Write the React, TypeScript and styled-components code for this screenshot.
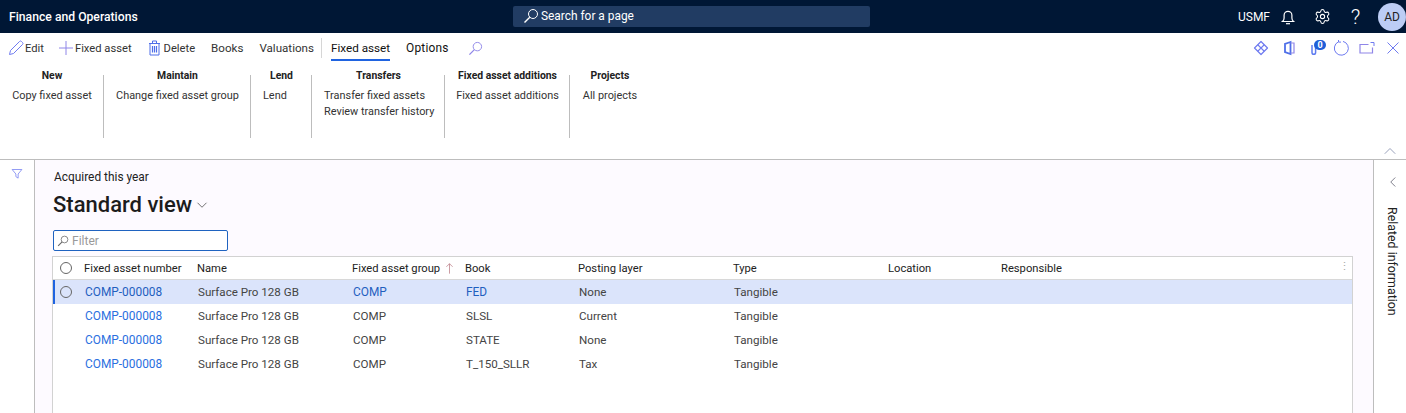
import React, { FC } from "react";
import styled, { createGlobalStyle } from "styled-components";
import { Settings } from "lucide-react";

const rows = [
  { book: "FED", layer: "None", selected: true },
  { book: "SLSL", layer: "Current", selected: false },
  { book: "STATE", layer: "None", selected: false },
  { book: "T_150_SLLR", layer: "Tax", selected: false },
];

const ribbon = [
  { title: "New", width: 104, items: ["Copy fixed asset"] },
  { title: "Maintain", width: 147, items: ["Change fixed asset group"] },
  { title: "Lend", width: 61, items: ["Lend"], left: true },
  { title: "Transfers", width: 133, items: ["Transfer fixed assets", "Review transfer history"], left: true },
  { title: "Fixed asset additions", width: 125, items: ["Fixed asset additions"] },
  { title: "Projects", width: 80, items: ["All projects"], last: true },
];

const Stroke: FC<{ size?: number; color?: string; children: React.ReactNode }> = ({
  size = 16,
  color = "#6f7bf0",
  children,
}) => (
  <svg width={size} height={size} viewBox="0 0 16 16" fill="none" stroke={color} strokeWidth="1">
    {children}
  </svg>
);

const SearchGlyph: FC<{ size?: number; color?: string }> = ({ size, color }) => (
  <Stroke size={size} color={color}>
    <circle cx="10" cy="6" r="4.5" />
    <path d="M6.8 9.2 1.5 14.5" strokeWidth="1.4" />
  </Stroke>
);

const App: FC = () => (
  <>
    <Global />
    <S.Page>
      <S.Nav>
        <S.Brand>Finance and Operations</S.Brand>
        <S.Search>
          <SearchGlyph size={16} color="#ffffff" />
          Search for a page
        </S.Search>
        <S.NavRight>
          <S.Company>USMF</S.Company>
          <S.NavIcon>
            <Stroke color="#fff">
              <path d="M2.5 12.5h11c-1-.8-1.6-1.6-1.6-3.5V6.3a3.9 3.9 0 0 0-7.8 0V9c0 1.9-.6 2.7-1.6 3.5Z" strokeWidth="1.2" />
              <path d="M6 14.7h4" strokeWidth="1.2" />
            </Stroke>
          </S.NavIcon>
          <S.NavIcon>
            <Settings size={17} color="#fff" strokeWidth={1.5} />
          </S.NavIcon>
          <S.Help>?</S.Help>
          <S.Avatar>AD</S.Avatar>
        </S.NavRight>
      </S.Nav>

      <S.ActionBar>
        <S.Action $gap={14}>
          <Stroke>
            <path d="M1.5 14.5l1-4L11.5 1.500a1.4 1.4 0 0 1 2 0l1 1a1.4 1.4 0 0 1 0 2L5.5 13.500Z" />
          </Stroke>
          Edit
        </S.Action>
        <S.Action $gap={15}>
          <Stroke color="#8f86e8">
            <path d="M8 1v14M1 8h14" />
          </Stroke>
          Fixed asset
        </S.Action>
        <S.Action $gap={16}>
          <Stroke color="#4f6fe8">
            <path d="M2 3.5h11M5.500 3.5V1h4v2.5M3 3.5V15h9V3.500" />
            <path d="M5.500 6v6.500M7.500 6v6.500M9.500 6v6.500" strokeWidth="1.2" />
          </Stroke>
          Delete
        </S.Action>
        <S.Tab>Books</S.Tab>
        <S.Tab>Valuations</S.Tab>
        <S.Divider />
        <S.Tab $active>Fixed asset</S.Tab>
        <S.Tab $dark>Options</S.Tab>
        <S.ToolSearch>
          <SearchGlyph size={15} color="#8f86e8" />
        </S.ToolSearch>
        <S.ActionIcons>
          <S.DiamondSlot>
            <Stroke>
              <path d="M8 1.5 14.500 8 8 14.500 1.500 8Z" strokeWidth="1.2" strokeLinejoin="round" />
              <path d="m4.750 4.750 6.500 6.500M11.250 4.750l-6.500 6.500" strokeWidth="1.1" />
            </Stroke>
          </S.DiamondSlot>
          <Stroke color="#4f6fe8">
            <path d="M9.5 2 4 4v8l5.500 2Z" strokeWidth="1.8" />
            <path d="M9.5 3H13v10H9.500" strokeWidth="1.2" stroke="#8f86e8" />
          </Stroke>
          <S.Badged>
            <Stroke color="#5f7cf0">
              <path d="M5 5v7.500a1.800 1.800 0 0 0 3.600 0V5" strokeWidth="1.5" />
            </Stroke>
            <S.Badge>0</S.Badge>
          </S.Badged>
          <Stroke>
            <path d="M5.300 1.900a7 7 0 1 0 4.700-.5" />
            <path d="M5.500 -.5v2.600h2.500" />
          </Stroke>
          <Stroke color="#8f86e8">
            <path d="M13.500 7.500v5.500H1V4.500h8.500" strokeWidth="1.2" />
            <path d="M11.500 2.500h3.500v3.500" stroke="#6f7bf0" />
          </Stroke>
          <Stroke>
            <path d="m2.500 2.500 11 11M13.500 2.500l-11 11" />
          </Stroke>
        </S.ActionIcons>
      </S.ActionBar>

      <S.Ribbon>
        {ribbon.map((group) => (
          <S.Group key={group.title} $width={group.width} $last={group.last}>
            <S.GroupTitle>{group.title}</S.GroupTitle>
            <S.GroupItems $left={group.left}>
              {group.items.map((item) => (
                <S.GroupItem key={item}>{item}</S.GroupItem>
              ))}
            </S.GroupItems>
          </S.Group>
        ))}
        <S.Collapse>
          <Stroke color="#8a94b0" size={14}>
            <path d="m2 10 6-6 6 6" />
          </Stroke>
        </S.Collapse>
      </S.Ribbon>

      <S.Body>
        <S.FilterRail>
          <Stroke size={12}>
            <path d="M1.500 2h13L9.500 8v5.500l-3-2V8Z" />
          </Stroke>
        </S.FilterRail>
        <S.Content>
          <S.Caption>Acquired this year</S.Caption>
          <S.ViewTitle>
            Standard view
            <Stroke color="#444" size={12}>
              <path d="m2 5 6 6 6-6" />
            </Stroke>
          </S.ViewTitle>
          <S.FilterBox>
            <SearchGlyph size={12} color="#666" />
            Filter
          </S.FilterBox>
          <S.Grid>
            <S.HeaderRow>
              <S.Check $gap={12} />
              <S.Cell $w={113}>Fixed asset number</S.Cell>
              <S.Cell $w={155}>Name</S.Cell>
              <S.Cell $w={113}>
                Fixed asset group
                <S.SortArrow>
                  <Stroke color="#b5707a" size={11}>
                    <path d="M8 15.500V1M3.500 5.500 8 1l4.500 4.500" />
                  </Stroke>
                </S.SortArrow>
              </S.Cell>
              <S.Cell $w={113}>Book</S.Cell>
              <S.Cell $w={155}>Posting layer</S.Cell>
              <S.Cell $w={155}>Type</S.Cell>
              <S.Cell $w={113}>Location</S.Cell>
              <S.Cell $w={120}>Responsible</S.Cell>
              <S.Kebab>⋮</S.Kebab>
            </S.HeaderRow>
            {rows.map((row) => (
              <S.Row key={row.book} $selected={row.selected}>
                {row.selected ? <S.Check $gap={13} /> : <S.CheckSpace />}
                <S.Cell $w={113}>
                  <S.Link $selected={row.selected}>COMP-000008</S.Link>
                </S.Cell>
                <S.Cell $w={155}>Surface Pro 128 GB</S.Cell>
                <S.Cell $w={113}>
                  {row.selected ? <S.Link $selected>COMP</S.Link> : "COMP"}
                </S.Cell>
                <S.Cell $w={113}>
                  {row.selected ? <S.Link $selected>{row.book}</S.Link> : row.book}
                </S.Cell>
                <S.Cell $w={155}>{row.layer}</S.Cell>
                <S.Cell $w={155}>Tangible</S.Cell>
              </S.Row>
            ))}
          </S.Grid>
        </S.Content>
        <S.RelatedRail>
          <Stroke color="#556" size={12}>
            <path d="m11 2-6 6 6 6" />
          </Stroke>
          <S.RelatedText>Related information</S.RelatedText>
        </S.RelatedRail>
      </S.Body>
    </S.Page>
  </>
);

export default App;

const Global = createGlobalStyle`
  html, body { margin: 0; padding: 0; background: #fff; }
  body { font-family: Roboto, "Liberation Sans", sans-serif; color: #222; overflow: hidden; }
`;

const S = {
  Page: styled.div`
    width: 1406px;
    height: 413px;
    display: flex;
    flex-direction: column;
    overflow: hidden;
    font-size: 12px;
  `,
  Nav: styled.header`
    height: 33px;
    background: #001735;
    color: #fff;
    display: flex;
    align-items: center;
    padding: 0 9px;
  `,
  Brand: styled.div`
    font-size: 12.2px;
    font-weight: 500;
    width: 504px;
  `,
  Search: styled.div`
    width: 357px;
    height: 21px;
    margin-top: -1px;
    background: #213c63;
    border-radius: 2px;
    display: flex;
    align-items: center;
    gap: 2px;
    padding-left: 10px;
    box-sizing: border-box;
    font-size: 11.9px;
  `,
  NavRight: styled.div`
    margin-left: auto;
    margin-right: -9px;
    display: flex;
    align-items: center;
  `,
  Company: styled.span`
    font-size: 12px;
    margin-right: 1px;
  `,
  NavIcon: styled.span`
    display: flex;
    width: 34px;
    justify-content: center;
  `,
  Help: styled.span`
    font-size: 21px;
    line-height: 24px;
    width: 33px;
    text-align: center;
    font-weight: 300;
  `,
  Avatar: styled.div`
    width: 28px;
    height: 28px;
    margin-left: 6px;
    border-radius: 50%;
    background: #bccdf5;
    color: #222;
    display: flex;
    align-items: center;
    justify-content: center;
    font-size: 12px;
  `,
  ActionBar: styled.div`
    height: 30px;
    display: flex;
    align-items: center;
    padding-left: 8px;
  `,
  Action: styled.span<{ $gap: number }>`
    display: inline-flex;
    align-items: center;
    gap: 1px;
    font-size: 11.2px;
    margin-right: ${({ $gap }) => $gap}px;
    color: #333;
  `,
  Tab: styled.span<{ $active?: boolean; $dark?: boolean }>`
    height: 28px;
    margin-bottom: 2px;
    display: inline-flex;
    align-items: center;
    margin-right: 16px;
    padding-top: 3px;
    box-sizing: border-box;
    font-size: ${({ $active, $dark }) => ($active ? "11.7px" : $dark ? "11.9px" : "11.6px")};
    letter-spacing: ${({ $dark }) => ($dark ? "0.2px" : "0")};
    color: ${({ $active, $dark }) => ($active || $dark ? "#111" : "#333")};
    border-bottom: 2px solid ${({ $active }) => ($active ? "#1f63e0" : "transparent")};
  `,
  Divider: styled.span`
    width: 1px;
    height: 20px;
    background: #d6d6d6;
    margin: 0 9px 0 -9px;
  `,
  ToolSearch: styled.span`
    display: inline-flex;
    margin-left: 3px;
  `,
  ActionIcons: styled.div`
    margin-left: auto;
    margin-right: 5px;
    display: flex;
    align-items: center;
    gap: 10px;
  `,
  DiamondSlot: styled.span`
    display: inline-flex;
    margin-right: 2px;
  `,
  Badged: styled.span`
    position: relative;
    display: inline-flex;
  `,
  Badge: styled.span`
    position: absolute;
    right: -3px;
    top: 0;
    width: 12px;
    height: 10px;
    border-radius: 6px;
    background: #1f5fd8;
    color: #fff;
    font-size: 9px;
    font-weight: 700;
    text-align: center;
    line-height: 10px;
  `,
  Ribbon: styled.div`
    height: 97px;
    box-sizing: border-box;
    border-bottom: 1px solid #bdbdbd;
    display: flex;
    align-items: flex-start;
    position: relative;
    padding-top: 6px;
    color: #333;
  `,
  Group: styled.div<{ $width: number; $last?: boolean }>`
    width: ${({ $width }) => $width}px;
    height: 69px;
    box-sizing: border-box;
    position: relative;
    display: flex;
    flex-direction: column;
    align-items: center;
    &::after {
      content: "";
      display: ${({ $last }) => ($last ? "none" : "block")};
      position: absolute;
      right: 0;
      top: 6px;
      bottom: 0;
      width: 1px;
      background: #bdbdbd;
    }
  `,
  GroupTitle: styled.div`
    font-size: 10.4px;
    font-weight: 700;
    line-height: 14px;
    color: #222;
  `,
  GroupItems: styled.div<{ $left?: boolean }>`
    margin-top: 6px;
    display: flex;
    flex-direction: column;
    gap: 2px;
    align-items: ${({ $left }) => ($left ? "flex-start" : "center")};
    align-self: ${({ $left }) => ($left ? "flex-start" : "center")};
    padding-left: ${({ $left }) => ($left ? "12px" : "0")};
  `,
  GroupItem: styled.div`
    font-size: 10.9px;
    line-height: 14px;
  `,
  Collapse: styled.span`
    position: absolute;
    right: 9px;
    bottom: 0;
    display: flex;
  `,
  Body: styled.div`
    flex: 1;
    display: flex;
    min-height: 0;
  `,
  FilterRail: styled.div`
    width: 34px;
    border-right: 1px solid #bdbdbd;
    display: flex;
    justify-content: center;
    align-items: flex-start;
    padding-top: 8px;
  `,
  Content: styled.main`
    flex: 1;
    background: #fdfaff;
    padding: 10px 20px 0 17px;
    min-width: 0;
  `,
  Caption: styled.div`
    padding-left: 2px;
    font-size: 11.9px;
    line-height: 15px;
  `,
  ViewTitle: styled.div`
    font-size: 22px;
    font-weight: 500;
    color: #1c1c1c;
    line-height: 28px;
    margin-top: 6px;
    padding-left: 1px;
    display: flex;
    align-items: center;
    gap: 4px;
  `,
  FilterBox: styled.div`
    margin-top: 11px;
    margin-left: 1px;
    width: 175px;
    height: 21px;
    box-sizing: border-box;
    border: 1px solid #1f63c0;
    border-radius: 2px;
    background: #fff;
    color: #9a9a9a;
    display: flex;
    align-items: center;
    gap: 3px;
    padding-left: 3px;
  `,
  Grid: styled.div`
    margin-top: 5px;
    height: 180px;
    background: #fff;
    border: 1px solid #d2d2d2;
    border-bottom: none;
  `,
  HeaderRow: styled.div`
    height: 22px;
    display: flex;
    align-items: center;
    position: relative;
    padding-left: 7px;
    border-bottom: 1px solid #d8d8d8;
    color: #222;
    font-size: 11.2px;
  `,
  Row: styled.div<{ $selected?: boolean }>`
    height: 24px;
    display: flex;
    align-items: center;
    padding-left: 7px;
    box-sizing: border-box;
    font-size: 11.6px;
    color: #444;
    background: ${({ $selected }) => ($selected ? "#dbe4fb" : "transparent")};
    box-shadow: ${({ $selected }) => ($selected ? "inset 2px 0 0 #1f63e0" : "none")};
  `,
  Check: styled.span<{ $gap: number }>`
    width: 12px;
    height: 12px;
    border: 1px solid #666;
    border-radius: 50%;
    margin-right: ${({ $gap }) => $gap}px;
    flex: none;
    box-sizing: border-box;
  `,
  CheckSpace: styled.span`
    width: 12px;
    margin-right: 13px;
    flex: none;
  `,
  Cell: styled.span<{ $w: number }>`
    width: ${({ $w }) => $w}px;
    flex: none;
    display: inline-flex;
    align-items: center;
    white-space: nowrap;
  `,
  Link: styled.span<{ $selected?: boolean }>`
    font-size: 11.9px;
    color: ${({ $selected }) => ($selected ? "#1f5fbf" : "#2a6fe0")};
  `,
  SortArrow: styled.span`
    display: inline-flex;
    margin-left: 4px;
  `,
  Kebab: styled.span`
    position: absolute;
    right: 2px;
    top: 3px;
    color: #aaa;
  `,
  RelatedRail: styled.aside`
    width: 33px;
    border-left: 1px solid #bdbdbd;
    display: flex;
    flex-direction: column;
    align-items: center;
    padding: 16px 0 0 5px;
    box-sizing: border-box;
    gap: 19px;
  `,
  RelatedText: styled.span`
    writing-mode: vertical-rl;
    font-size: 12.4px;
    color: #222;
  `,
};
